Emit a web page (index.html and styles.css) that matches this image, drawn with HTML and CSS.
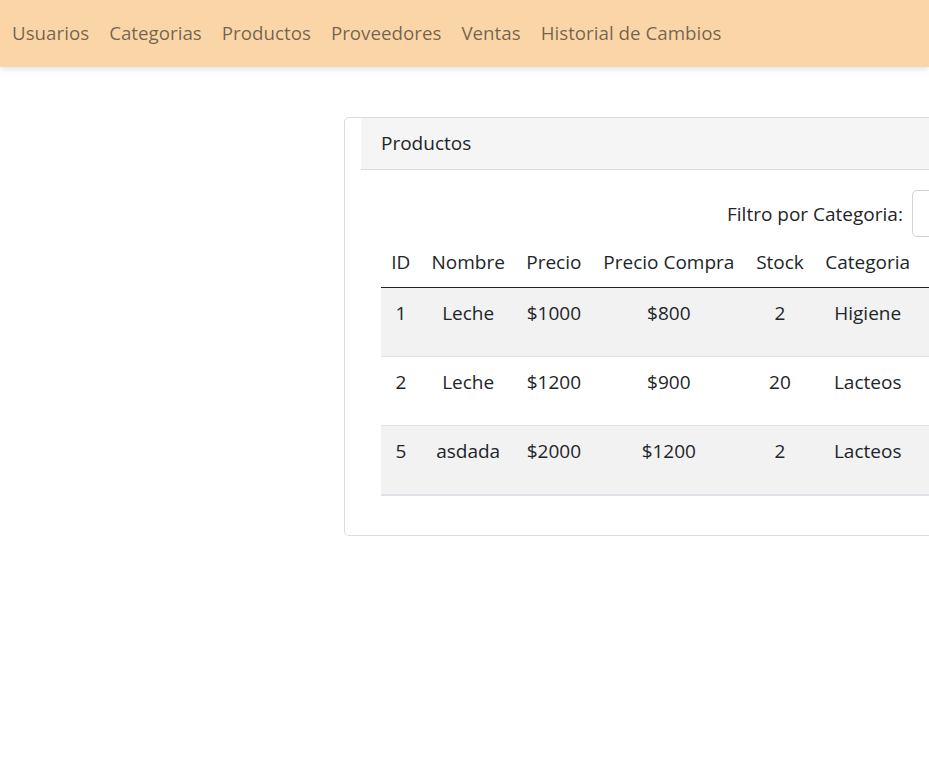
FILE: index.html
```html
<!DOCTYPE html>
<html lang="es">
<head>
<meta charset="utf-8">
<title>Productos</title>
<link rel="stylesheet" href="styles.css">
</head>
<body>
<nav class="navbar">
  <a class="nav-link" href="#">Usuarios</a>
  <a class="nav-link" href="#">Categorias</a>
  <a class="nav-link" href="#">Productos</a>
  <a class="nav-link" href="#">Proveedores</a>
  <a class="nav-link" href="#">Ventas</a>
  <a class="nav-link" href="#">Historial de Cambios</a>
</nav>
<main class="main">
  <section class="card">
    <div class="card-inner">
      <div class="card-header">Productos</div>
      <div class="card-body">
        <div class="filter">
          <label class="filter-label" for="cat">Filtro por Categoria:</label>
          <select class="filter-select" id="cat"><option></option></select>
        </div>
        <table class="table">
          <thead>
            <tr><th>ID</th><th>Nombre</th><th>Precio</th><th>Precio Compra</th><th>Stock</th><th>Categoria</th><th class="rest"></th></tr>
          </thead>
          <tbody>
            <tr class="odd"><td>1</td><td>Leche</td><td>$1000</td><td>$800</td><td>2</td><td>Higiene</td><td class="rest"></td></tr>
            <tr><td>2</td><td>Leche</td><td>$1200</td><td>$900</td><td>20</td><td>Lacteos</td><td class="rest"></td></tr>
            <tr class="odd"><td>5</td><td>asdada</td><td>$2000</td><td>$1200</td><td>2</td><td>Lacteos</td><td class="rest"></td></tr>
          </tbody>
        </table>
      </div>
    </div>
  </section>
</main>
</body>
</html>
```

FILE: styles.css
```css
html, body {
  margin: 0;
  padding: 0;
  overflow: hidden;
  background: #fff;
}
body {
  font-family: "Open Sans", "Noto Sans", sans-serif;
  font-size: 19px;
  color: #212529;
}
.navbar {
  display: flex;
  align-items: center;
  height: 67px;
  padding-left: 2px;
  background: #fad5a7;
  box-shadow: 0 2px 6px rgba(0, 0, 0, 0.12);
}
.nav-link {
  padding: 0 10px 2px;
  font-size: 18.75px;
  color: rgba(0, 0, 0, 0.55);
  text-decoration: none;
  line-height: 30px;
}
.main {
  padding: 50px 0 0 344px;
}
.card {
  width: 900px;
  border: 1px solid #dcdcdc;
  border-radius: 5px;
  background: #fff;
}
.card-inner {
  padding-left: 16px;
}
.card-header {
  padding: 10px 20px;
  line-height: 31px;
  background: #f5f5f5;
  border-bottom: 1px solid #dcdcdc;
}
.card-body {
  padding: 20px 20px 19px;
}
.filter {
  display: flex;
  align-items: center;
  gap: 9px;
  padding-left: 346px;
}
.filter-label {
  line-height: 30px;
}
.filter-select {
  width: 200px;
  height: 47px;
  border: 1px solid #ced4da;
  border-radius: 5px;
  background: #fff;
}
.table {
  border-collapse: collapse;
  margin: 0 0 20px;
  width: 760px;
}
.table th, .table td {
  padding: 10px 10px;
  line-height: 30px;
  text-align: center;
  font-weight: 400;
  vertical-align: top;
  white-space: nowrap;
}
.table .rest {
  width: 200px;
}
.table thead th {
  border-bottom: 1px solid #212529;
}
.table tbody td {
  border-top: 1px solid #dee2e6;
  height: 48px;
}
.table tbody tr:last-child td {
  border-bottom: 2px solid #dee2e6;
}
.table tbody tr.odd td {
  background: #f2f2f2;
}
```
